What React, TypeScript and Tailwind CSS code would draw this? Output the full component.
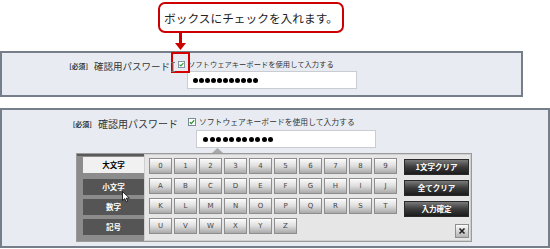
import React from "react";

const jp = { fontFamily: '"Noto Sans CJK JP", "Noto Sans", sans-serif' };
const lat = { fontFamily: '"DejaVu Sans", "Liberation Sans", sans-serif' };

function Check({ s }: { s: number }) {
  return (
    <svg width={s} height={s} viewBox="0 0 8 8" className="block">
      <rect x="0.5" y="0.5" width="7" height="7" fill="#fff" stroke="#7a8a99" />
      <path d="M1.8 4.2 L3.3 5.6 L6.2 2.3" fill="none" stroke="#2e9a2e" strokeWidth="1.3" />
    </svg>
  );
}

function Dots({ d, g }: { d: string; g: string }) {
  return (
    <div className={`flex ${g} items-center`}>
      {Array.from({ length: 11 }).map((_, i) => (
        <div key={i} className={`${d} rounded-full bg-black`} />
      ))}
    </div>
  );
}

export default function App() {
  const rows = [
    ["0", "1", "2", "3", "4", "5", "6", "7", "8", "9"],
    ["A", "B", "C", "D", "E", "F", "G", "H", "I", "J"],
    ["K", "L", "M", "N", "O", "P", "Q", "R", "S", "T"],
    ["U", "V", "W", "X", "Y", "Z"],
  ];
  return (
    <div className="w-[550px] h-[249px] bg-white overflow-hidden" style={jp}>
      {/* callout */}
      <div className="h-[51px] flex flex-col">
        <div className="ml-[158px] mt-[2px] w-[186px] h-[31px] border-2 border-[#cc0000] rounded-[7px] bg-white flex items-center justify-center">
          <span className="text-[11.7px] text-[#222]" style={jp}>
            ボックスにチェックを入れます。
          </span>
        </div>
        <div className="ml-[175px] flex flex-col items-center w-[11px]">
          <div className="w-[3px] h-[10px] bg-[#cc0000]" />
          <svg width="11" height="7" viewBox="0 0 11 7" className="block">
            <path d="M0 0 H11 L5.5 7 Z" fill="#cc0000" />
          </svg>
        </div>
      </div>

      {/* panel 1 (slightly smaller scale) */}
      <div className="w-[523px] h-[46px] border-2 border-[#767e89] bg-[#e8ecf2] pt-[6px]">
        <div className="flex items-start">
          <div className="w-[168px] flex justify-end items-center gap-[6px] pt-[1px]" style={jp}>
            <span className="text-[6.8px] font-bold text-[#333] leading-[12px]">[必須]</span>
            <span className="text-[9.5px] text-[#333] leading-[12px]">確認用パスワード</span>
          </div>
          <div className="ml-[8px] flex flex-col">
            <div className="relative flex items-center gap-[3px] h-[10px]">
              <Check s={7} />
              <span className="text-[7.3px] text-[#333] leading-[10px] whitespace-nowrap" style={jp}>
                ソフトウェアキーボードを使用して入力する
              </span>
              <div className="absolute left-[-7px] top-[-7px] w-[19px] h-[21px] border-2 border-[#d40000]" />
              <svg className="absolute left-[-8px] top-[3px]" width="6" height="10" viewBox="0 0 6 10">
                <path d="M1 0.5 H5 M3 0.5 V9.5 M1 9.5 H5" stroke="#777" strokeWidth="1" fill="none" />
              </svg>
            </div>
            <div className="ml-[9px] mt-[2px] w-[170px] h-[18px] bg-white border border-[#c9cdd2] flex items-center pl-[5px]">
              <Dots d="w-[5px] h-[5px]" g="gap-[1px]" />
            </div>
          </div>
        </div>
      </div>

      <div className="h-[11px]" />

      {/* panel 2 */}
      <div className="relative w-[550px] h-[140px] border-2 border-[#767e89] bg-[#e8ecf2] pt-[7px]">
        <div className="flex items-start">
          <div className="w-[176px] flex justify-end items-center gap-[6px] pt-[1px]" style={jp}>
            <span className="text-[7px] font-bold text-[#333] leading-[12px]">[必須]</span>
            <span className="text-[10px] text-[#333] leading-[12px]">確認用パスワード</span>
          </div>
          <div className="ml-[10px] flex flex-col">
            <div className="flex items-center gap-[3px] h-[10px]">
              <Check s={8} />
              <span className="text-[7.8px] text-[#333] leading-[10px] whitespace-nowrap" style={jp}>
                ソフトウェアキーボードを使用して入力する
              </span>
            </div>
            <div className="ml-[8px] mt-[3px] w-[180px] h-[18px] bg-white border border-[#c9cdd2] flex items-center pl-[6px]">
              <Dots d="w-[5px] h-[5px]" g="gap-[1.5px]" />
            </div>
          </div>
        </div>
        <div className="ml-[210px] h-[5px]">
          <svg width="11" height="5" viewBox="0 0 11 5" className="block">
            <path d="M0 5 L5.5 0 L11 5 Z" fill="#a9a9a9" />
          </svg>
        </div>
        <div className="ml-[74px] w-[396px] h-[89px] flex border border-[#9a9a9a]">
          <div className="w-[67px] bg-[#8c8c8c] border-t-2 border-[#5a5a5a] flex flex-col items-end">
            {[
              { t: "大文字", a: true, c: "mt-[1px]" },
              { t: "小文字", a: false, c: "mt-[6px]" },
              { t: "数字", a: false, c: "mt-[4px]" },
              { t: "記号", a: false, c: "mt-[4px]" },
            ].map((x) => (
              <div
                key={x.t}
                className={`${x.c} h-[16px] w-[61px] flex items-center justify-center text-[7.5px] font-bold ${
                  x.a ? "bg-[#f1f1f1] text-black" : "bg-[#555555] text-white"
                }`}
                style={jp}
              >
                {x.t}
              </div>
            ))}
          </div>
          <div className="flex-1 bg-[#e6e6e6] border border-[#cfcfcf] pl-[4px] pt-[3px] flex">
            <div className="flex flex-col gap-[4px] w-[248px]">
              {rows.map((r, i) => (
                <div key={i} className="flex gap-[2px]">
                  {r.map((k) => (
                    <div
                      key={k}
                      className="w-[23px] h-[16px] flex items-center justify-center text-[7px] text-[#444] border border-[#8e8e8e] bg-gradient-to-b from-[#fbfbfb] via-[#dedede] to-[#a9a9a9] shadow-[inset_0_1px_0_#fff]"
                      style={lat}
                    >
                      {k}
                    </div>
                  ))}
                </div>
              ))}
            </div>
            <div className="ml-[7px] flex flex-col gap-[5px] pt-[1px] pb-[2px]">
              {["1文字クリア", "全てクリア", "入力確定"].map((t) => (
                <div
                  key={t}
                  className="w-[65px] h-[16px] flex items-center justify-center text-[7.5px] font-bold text-white border border-[#2a2a2a] bg-gradient-to-b from-[#7a7a7a] via-[#3c3c3c] to-[#1c1c1c]"
                  style={jp}
                >
                  {t}
                </div>
              ))}
              <div className="mt-auto self-end w-[14px] h-[14px] border border-[#8e8e8e] bg-gradient-to-b from-[#fbfbfb] to-[#b5b5b5] flex items-center justify-center">
                <svg width="8" height="8" viewBox="0 0 8 8">
                  <path d="M1.5 1.5 L6.5 6.5 M6.5 1.5 L1.5 6.5" stroke="#222" strokeWidth="1.6" />
                </svg>
              </div>
            </div>
          </div>
        </div>
        {/* mouse pointer */}
        <svg className="absolute left-[120px] top-[81px]" width="8" height="12" viewBox="0 0 8 12">
          <path d="M0.5 0.5 L0.5 9.5 L2.8 7.6 L4.3 11 L5.7 10.4 L4.3 7.1 L7.3 7.1 Z" fill="#fff" stroke="#000" strokeWidth="0.8" />
        </svg>
      </div>
    </div>
  );
}
